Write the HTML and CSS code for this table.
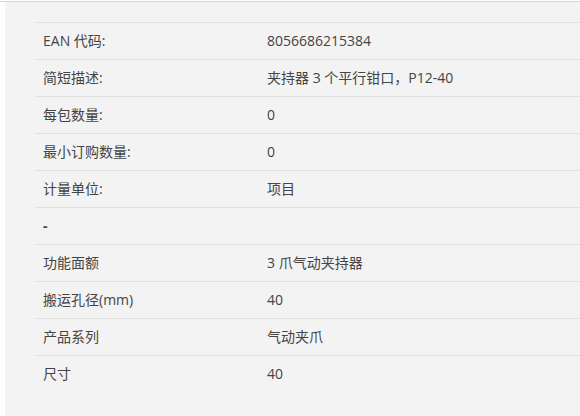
FILE: index.html
```
<!DOCTYPE html>
<html lang="zh">
<head>
<meta charset="utf-8">
<link rel="stylesheet" href="styles.css">
</head>
<body>
<div class="page">
  <div class="panel">
    <table class="specs">
      <tr><td class="k">EAN 代码:</td><td class="v">8056686215384</td></tr>
      <tr><td class="k">简短描述:</td><td class="v">夹持器 3 个平行钳口，P12-40</td></tr>
      <tr><td class="k">每包数量:</td><td class="v">0</td></tr>
      <tr><td class="k">最小订购数量:</td><td class="v">0</td></tr>
      <tr><td class="k">计量单位:</td><td class="v">项目</td></tr>
      <tr><td class="k dash">-</td><td class="v"></td></tr>
      <tr><td class="k">功能面额</td><td class="v">3 爪气动夹持器</td></tr>
      <tr><td class="k">搬运孔径(mm)</td><td class="v">40</td></tr>
      <tr><td class="k">产品系列</td><td class="v">气动夹爪</td></tr>
      <tr class="last"><td class="k">尺寸</td><td class="v">40</td></tr>
    </table>
  </div>
</div>
</body>
</html>
```
FILE: styles.css
```
html, body {
  margin: 0;
  padding: 0;
  background: #ffffff;
  width: 580px;
  height: 416px;
  overflow: hidden;
}
.page {
  margin-top: 1px;
  border-top: 1px solid #d6d6d6;
  height: 414px;
}
.panel {
  margin-left: 5px;
  height: 100%;
  background: #f3f3f3;
  padding: 20px 0 0 30px;
  box-sizing: border-box;
  overflow: hidden;
}
.specs {
  border-collapse: collapse;
  width: 620px;
  border-top: 1px solid #e0e0e0;
  font-family: "Open Sans", "Noto Sans CJK SC", sans-serif;
  font-size: 14px;
  color: #444444;
}
.specs td {
  height: 37px;
  padding: 0 8px 2px;
  border-bottom: 1px solid #e0e0e0;
  vertical-align: middle;
  box-sizing: border-box;
}
.specs tr.last td {
  border-bottom: none;
}
.specs .k {
  width: 224px;
}
.specs .dash {
  font-weight: 700;
}
```
